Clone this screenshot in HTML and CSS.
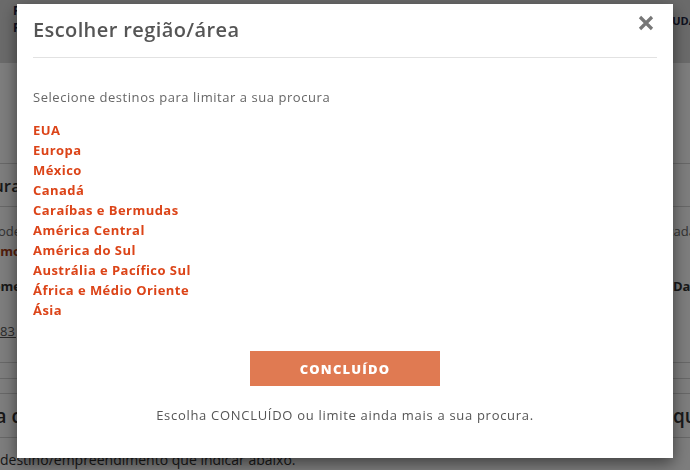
FILE: index.html
```html
<!DOCTYPE html>
<html lang="pt">
<head>
  <meta charset="UTF-8">
  <meta name="viewport" content="width=device-width, initial-scale=1.0">
  <title>Escolher região/área</title>
  <link rel="stylesheet" href="styles.css">
</head>
<body>
  <div class="page">
    <header class="topbar">
      <div class="brand">
        <span>F</span>
        <span>F</span>
      </div>
      <nav class="help">AJUDA</nav>
    </header>

    <main class="content">
      <div class="row row-title">
        <div class="lead"><h2>Procura</h2></div>
      </div>
      <div class="row row-text">
        <div class="lead"><span>pode</span></div>
        <div class="tail"><span>personalizada</span></div>
      </div>
      <div class="row row-link">
        <div class="lead"><span>Saiba como</span></div>
      </div>
      <div class="row row-label">
        <div class="lead"><span>Nome</span></div>
        <div class="tail tail-start"><span>Datas</span></div>
      </div>
      <div class="row row-code">
        <a href="#">8312</a>
      </div>
      <div class="row row-line row-line-1"></div>
      <div class="row row-line row-line-2"></div>
      <div class="row row-line row-line-3"></div>
      <div class="row row-title row-ruled">
        <div class="lead"><h2>Procura c</h2></div>
        <div class="tail tail-start"><span>que</span></div>
      </div>
      <p class="row-foot">destino/empreendimento que indicar abaixo.</p>
    </main>
  </div>

  <div class="backdrop"></div>

  <div class="modal" role="dialog">
    <div class="modal-header">
      <h1>Escolher região/área</h1>
      <button type="button" class="close" aria-label="Fechar">
        <svg width="16" height="16" viewBox="0 0 16 16">
          <path d="M2 2 L14 14 M14 2 L2 14" stroke="#777" stroke-width="3.2" stroke-linecap="butt"/>
        </svg>
      </button>
    </div>
    <div class="modal-body">
      <p class="hint">Selecione destinos para limitar a sua procura</p>
      <ul class="regions">
        <li><a href="#">EUA</a></li>
        <li><a href="#">Europa</a></li>
        <li><a href="#">México</a></li>
        <li><a href="#">Canadá</a></li>
        <li><a href="#">Caraíbas e Bermudas</a></li>
        <li><a href="#">América Central</a></li>
        <li><a href="#">América do Sul</a></li>
        <li><a href="#">Austrália e Pacífico Sul</a></li>
        <li><a href="#">África e Médio Oriente</a></li>
        <li><a href="#">Ásia</a></li>
      </ul>
      <div class="actions">
        <button type="button" class="done">CONCLUÍDO</button>
      </div>
      <p class="note">Escolha CONCLUÍDO ou limite ainda mais a sua procura.</p>
    </div>
  </div>
</body>
</html>
```

FILE: styles.css
```css
body {
  margin: 0;
  font-family: 'Open Sans', 'Noto Sans', sans-serif;
  color: #333;
  background: #fcfcfc;
  overflow: hidden;
}
.page {
  width: 690px;
  height: 470px;
  overflow: hidden;
}

/* page behind the dialog */
.topbar {
  height: 63px;
  background: #d6d6d6;
  display: flex;
  justify-content: space-between;
  padding: 2px 0 0 13px;
  box-sizing: border-box;
}
.brand {
  display: flex;
  flex-direction: column;
  font-weight: bold;
  font-size: 12px;
  line-height: 17px;
  color: #1c2340;
}
.help {
  width: 29px;
  overflow: hidden;
  white-space: nowrap;
  font-size: 11px;
  font-weight: bold;
  color: #1c2340;
  padding-top: 11px;
}
.content {
  margin-top: 100px;
}
.row {
  display: flex;
  justify-content: space-between;
}
.lead {
  width: 21px;
  display: flex;
  justify-content: flex-end;
  white-space: nowrap;
}
.tail {
  width: 50px;
  margin-right: -6px;
  display: flex;
  justify-content: flex-end;
  white-space: nowrap;
  overflow: hidden;
}
.tail-start {
  width: 17px;
  margin-right: 0;
  justify-content: flex-start;
}
.row h2 {
  margin: 0;
  font-size: 17px;
  font-weight: 600;
}
.row-title {
  border-top: 1px solid #d0d0d0;
  border-bottom: 1px solid #d0d0d0;
  height: 44px;
  align-items: center;
  box-sizing: border-box;
}
.row-text {
  font-size: 13px;
  color: #666;
  margin-top: 14px;
  line-height: 20px;
}
.row-link {
  font-size: 13px;
  font-weight: bold;
  color: #a33a14;
  line-height: 20px;
}
.row-label {
  font-size: 13px;
  font-weight: bold;
  margin-top: 15px;
  line-height: 20px;
}
.row-code {
  margin-top: 25px;
  font-size: 13px;
  line-height: 20px;
  width: 16px;
  overflow: hidden;
}
.row-code a {
  color: #555;
}
.row-line {
  border-bottom: 1px solid #d0d0d0;
}
.row-line-1 {
  height: 21px;
}
.row-line-2 {
  height: 15px;
}
.row-line-3 {
  height: 14px;
}
.row-ruled {
  border-top: none;
}
.row-ruled h2,
.row-ruled span {
  font-size: 19px;
  font-weight: 600;
}
.row-foot {
  margin: 12px 0 0;
  font-size: 14px;
  line-height: 19px;
  color: #333;
}
.backdrop {
  position: fixed;
  inset: 0;
  background: rgba(0, 0, 0, 0.5);
}

/* dialog */
.modal {
  position: absolute;
  left: 17px;
  top: 4px;
  width: 656px;
  height: 454px;
  box-sizing: border-box;
  padding: 14px 16px 0;
  background: #fff;
  box-shadow: 0 5px 15px rgba(0, 0, 0, 0.5);
  color: #555;
}
.modal-header {
  display: flex;
  justify-content: space-between;
  align-items: flex-start;
  padding-bottom: 15px;
  border-bottom: 1px solid #e2e2e2;
}
.modal-header h1 {
  margin: 0;
  font-size: 20px;
  line-height: 24px;
  font-weight: 600;
  letter-spacing: 0.4px;
  color: #555;
}
.close {
  background: none;
  border: none;
  padding: 0;
  margin: -3px 3px 0 0;
  cursor: pointer;
}
.hint {
  margin: 29px 0 0;
  font-size: 13px;
  line-height: 20px;
  letter-spacing: 0.55px;
  color: #666;
}
.regions {
  list-style: none;
  margin: 13px 0 0;
  padding: 0;
}
.regions li {
  line-height: 20px;
  font-size: 13px;
}
.regions a {
  color: #dc4418;
  font-weight: bold;
  letter-spacing: 0.45px;
  text-decoration: none;
}
.actions {
  display: flex;
  justify-content: center;
  margin-top: 31px;
}
.done {
  width: 190px;
  height: 35px;
  background-color: #e07a52;
  color: white;
  border: none;
  font-family: inherit;
  font-size: 13px;
  font-weight: 800;
  letter-spacing: 1.2px;
  cursor: pointer;
}
.note {
  margin: 19px 0 0;
  text-align: center;
  font-size: 13px;
  line-height: 20px;
  letter-spacing: 0.7px;
  color: #555;
}
```
